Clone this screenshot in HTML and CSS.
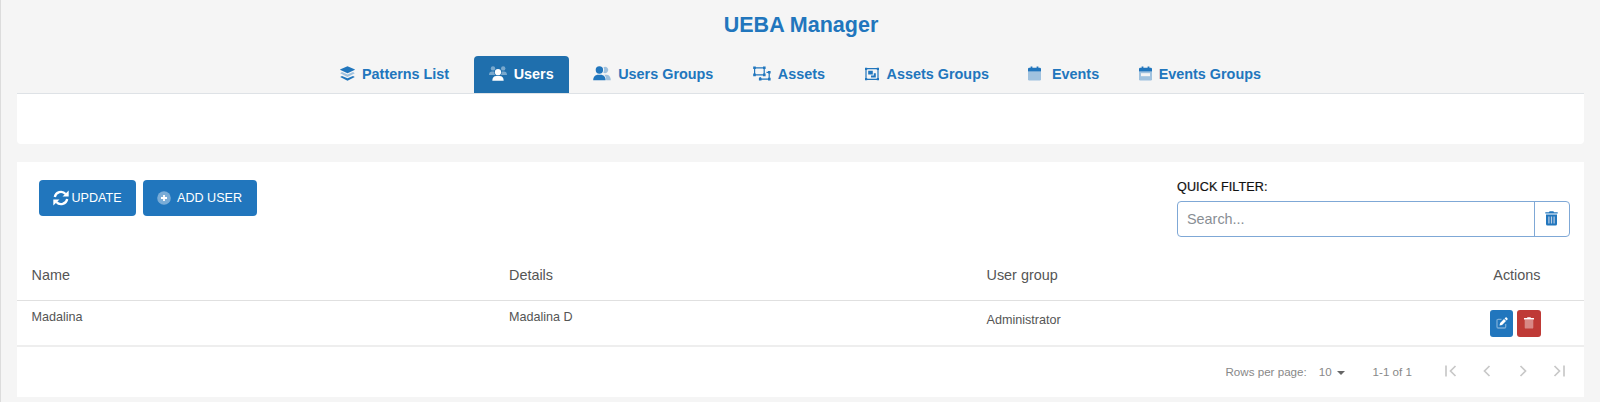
FILE: index.html
```html
<!DOCTYPE html>
<html lang="en">
<head>
    <meta charset="UTF-8">
    <meta name="viewport" content="width=device-width, initial-scale=1.0">
    <title>UEBA Manager</title>
    <link rel="stylesheet" href="styles.css">
</head>
<body>
    <h1>UEBA Manager</h1>

    <!-- Tabs -->
    <nav class="tabs">
        <a class="tab">
            <svg class="icon" width="15" height="15" viewBox="0 0 15 15">
                <path d="M7.5 0.2 14.5 3.300q.7.400 0 .8L7.500 7.300 0.500 4.100q-.7-.4 0-.8z"/>
                <path class="faded" d="M0.200 7.200 2 6 7.500 8.500 13 6 14.800 7.200 7.500 10.900z"/>
                <path d="M0.200 10.900 2 9.900 7.500 12.300 13 9.900 14.800 10.900 7.500 14.700z"/>
            </svg>
            <span>Patterns List</span>
        </a>
        <a class="tab active">
            <svg class="icon" width="18" height="15" viewBox="0 0 18 15">
                <g class="faded">
                    <circle cx="4" cy="2.4" r="2.2"/>
                    <circle cx="14.2" cy="2.4" r="2.2"/>
                    <path d="M0 9C0 6.500 1.200 5.400 3 5.400h2.200C5.200 7 5.500 8 6.300 9z"/>
                    <path d="M18 9c0-2.500-1.200-3.600-3-3.600h-2.200c0 1.600-.3 2.600-1.100 3.600z"/>
                </g>
                <circle cx="9" cy="6.200" r="3.100"/>
                <path d="M3.300 14.700c0-3 1.500-4.700 4-4.700h3.400c2.500 0 4 1.700 4 4.700z"/>
            </svg>
            <span>Users</span>
        </a>
        <a class="tab">
            <svg class="icon" width="18" height="15" viewBox="0 0 18 15">
                <g class="faded">
                    <path d="M10.500 1.300A3.100 3.100 0 1 1 10.200 6.500 5 5 0 0 0 10.500 1.300z"/>
                    <path d="M12 8.700h1.500c2.500 0 4.300 2 4.300 5.500h-4.600c0-2.300-.5-4-1.900-5.500z"/>
                </g>
                <circle cx="6.400" cy="4" r="3.700"/>
                <path d="M0.200 14.300c0-3.500 2-5.600 5-5.600h2.400c3 0 5 2.100 5 5.600z"/>
            </svg>
            <span>Users Groups</span>
        </a>
        <a class="tab">
            <svg class="icon" width="18" height="15" viewBox="0 0 18 15">
                <path class="line" d="M1.600 1.900h9.600v7H1.600zM13.500 6.300h2.700v6.800H7.200V11"/>
                <path d="M0.200 0.500h2.600v2.600H0.200zM10 0.500h2.600v2.600H10zM0.200 7.600h2.600v2.600H0.200zM10 7.600h2.600v2.600H10zM15 5h2.600v2.600H15zM15 11.800h2.600v2.600H15zM5.900 11.800h2.600v2.600H5.900z"/>
            </svg>
            <span>Assets</span>
        </a>
        <a class="tab">
            <svg class="icon gap-wide" width="14" height="14" viewBox="0 0 14 14">
                <path class="line" d="M1 1.700h12v10.600H1z"/>
                <path d="M0 0.800h2.200v2.200H0zM11.800 0.800H14v2.200h-2.200zM0 11h2.200v2.200H0zM11.800 11H14v2.200h-2.200zM3.200 3.800h4.600v3.700H3.200zM8.800 6.300h2v4.200H6V8.500h2.800z"/>
            </svg>
            <span>Assets Groups</span>
        </a>
        <a class="tab">
            <svg class="icon gap-extra" width="13" height="15" viewBox="0 0 13 15">
                <path d="M0 5.500V3q0-1.200 1.200-1.200H2.600V0.500h1.800v1.300h4.200V0.500h1.800v1.300h1.400Q13 1.800 13 3v2.500z"/>
                <path class="faded" d="M0 5.500h13v7.700q0 1.200-1.200 1.200H1.200Q0 14.400 0 13.200z"/>
            </svg>
            <span>Events</span>
        </a>
        <a class="tab">
            <svg class="icon" width="13" height="15" viewBox="0 0 13 15">
                <path d="M0 5.500V3q0-1.200 1.200-1.200H2.600V0.500h1.800v1.300h4.200V0.500h1.800v1.300h1.400Q13 1.800 13 3v2.500z"/>
                <path class="faded" d="M0 5.500h13v7.700q0 1.200-1.200 1.200H1.200Q0 14.400 0 13.200z"/>
                <path class="blank" d="M2 7.200h9v3H2z"/>
            </svg>
            <span>Events Groups</span>
        </a>
    </nav>

    <div class="panel"></div>

    <!-- Users table -->
    <main class="card">
        <div class="toolbar">
            <div class="buttons">
                <button class="btn btn-update">
                    <svg width="16" height="16" viewBox="0 0 16 16">
                        <path class="arc" d="M1.800 7A6.200 6.200 0 0 1 12.600 4M14.200 9A6.200 6.200 0 0 1 3.400 12"/>
                        <path d="M15.700 0.400V6.600H9.500zM0.300 15.600V9.400h6.200z"/>
                    </svg>
                    <span>UPDATE</span>
                </button>
                <button class="btn btn-add">
                    <svg width="14" height="14" viewBox="0 0 14 14">
                        <circle class="faded" cx="7" cy="7" r="6.800"/>
                        <path d="M6.100 4h1.800v2.100H10v1.800H7.900V10H6.100V7.900H4V6.100h2.100z"/>
                    </svg>
                    <span>ADD USER</span>
                </button>
            </div>
            <div class="filter">
                <label for="search">QUICK FILTER:</label>
                <div class="search-group">
                    <input type="text" id="search" placeholder="Search...">
                    <button class="clear">
                        <svg width="13" height="15" viewBox="0 0 13 15">
                            <path d="M0.300 1.200H4L4.600 0.300h3.800L9 1.200h3.700v1.300H0.300z"/>
                            <path d="M1 3.500h11v9.500q0 1.500-1.500 1.500h-8Q1 14.500 1 13z"/>
                            <path class="bars" d="M3.900 5.500v7M6.500 5.500v7M9.100 5.500v7"/>
                        </svg>
                    </button>
                </div>
            </div>
        </div>

        <div class="row head">
            <div>Name</div>
            <div>Details</div>
            <div>User group</div>
            <div class="actions-title">Actions</div>
        </div>
        <div class="row body">
            <div>Madalina</div>
            <div>Madalina D</div>
            <div class="group">Administrator</div>
            <div class="actions">
                <button class="edit">
                    <svg width="12" height="12" viewBox="0 0 12 12">
                        <path class="faded frame" d="M5.500 2.300H2.200Q1 2.300 1 3.500v6.300Q1 11 2.200 11h6.300q1.200 0 1.200-1.200V7"/>
                        <path d="M3.500 8.600 4.100 6 8 2.100 10 4.100 6.100 8zM8.600 1.500 9.500 0.600q.6-.5 1.200 0l.8.800q.5.600 0 1.200l-.9.900z"/>
                    </svg>
                </button>
                <button class="delete">
                    <svg width="10" height="12" viewBox="0 0 10 12">
                        <path d="M0 0.900h3L3.500 0.200h3L7 0.900h3v1.500H0z"/>
                        <path class="faded" d="M0.700 2.400h8.600V10.400q0 1.200-1.200 1.200H1.900Q0.700 11.600 0.700 10.400z"/>
                    </svg>
                </button>
            </div>
        </div>

        <div class="pagination">
            <span class="label">Rows per page:</span>
            <span class="size">10</span>
            <span class="caret"></span>
            <span class="range">1-1 of 1</span>
            <div class="pager">
                <svg width="12" height="12" viewBox="0 0 12 12"><path d="M1 .5v11M10.500 1 5.500 6l5 5"/></svg>
                <svg width="12" height="12" viewBox="0 0 12 12"><path d="M8.500 1 3.500 6l5 5"/></svg>
                <svg width="12" height="12" viewBox="0 0 12 12"><path d="M3.500 1 8.500 6l-5 5"/></svg>
                <svg width="12" height="12" viewBox="0 0 12 12"><path d="M11 .5v11M1.500 1 6.500 6l-5 5"/></svg>
            </div>
        </div>
    </main>
</body>
</html>
```
FILE: styles.css
```css
* {
    box-sizing: border-box;
}

body {
    margin: 0;
    padding: 0 16px 0 16px;
    height: 402px;
    overflow: hidden;
    background-color: #f5f5f5;
    border-left: 1px solid #dcdcdc;
    font-family: "Liberation Sans", Arial, sans-serif;
    color: #555;
}

h1 {
    margin: 0;
    height: 56px;
    padding: 12px 0 0 1px;
    font-size: 21.5px;
    line-height: 26px;
    text-align: center;
    color: #2176bd;
}

button {
    border: none;
    padding: 0;
    font-family: inherit;
    cursor: pointer;
}

svg {
    flex: none;
    fill: currentColor;
}

.faded {
    opacity: 0.4;
}

/* Tabs */
.tabs {
    display: flex;
    justify-content: center;
    gap: 9.5px;
    height: 38px;
    border-bottom: 1px solid #dee2e6;
}

.tab {
    display: flex;
    align-items: center;
    padding: 0 15px 2px;
    font-size: 14.4px;
    font-weight: bold;
    color: #2176bd;
    white-space: nowrap;
}

.tab.active {
    background-color: #1f6fad;
    color: #fff;
    border-radius: 4px 4px 0 0;
}

.icon {
    margin-right: 7px;
}

.gap-wide {
    margin-right: 8px;
}

.gap-extra {
    margin-right: 10.5px;
}

.line {
    fill: none;
    stroke: currentColor;
    stroke-width: 1.2;
}

.blank {
    fill: #f5f5f5;
}

.panel {
    height: 50px;
    background-color: #fff;
    border-radius: 0 0 4px 4px;
}

/* Card */
.card {
    margin-top: 18px;
    height: 235px;
    background-color: #fff;
}

.toolbar {
    display: flex;
    justify-content: space-between;
    height: 88px;
    padding: 18px 14px 0 21.5px;
}

.buttons {
    display: flex;
    gap: 7px;
}

.btn {
    display: flex;
    align-items: center;
    height: 36px;
    padding: 0 14px 1px;
    border-radius: 4px;
    background-color: #2176bd;
    color: #fff;
    font-size: 12.6px;
}

.btn-update {
    width: 97.5px;
    gap: 3px;
}

.btn-add {
    width: 114px;
    gap: 6px;
}

.arc {
    fill: none;
    stroke: currentColor;
    stroke-width: 2.3;
}

.filter {
    width: 393px;
}

.filter label {
    display: block;
    height: 21px;
    line-height: 15px;
    font-size: 12.6px;
    letter-spacing: 0.1px;
    color: #111;
    -webkit-text-stroke: 0.2px #111;
}

.search-group {
    display: flex;
    height: 36px;
    border: 1px solid #7fa8d6;
    border-radius: 4px;
}

.search-group input {
    flex: 1;
    border: none;
    outline: none;
    padding: 0 9px 1px;
    background: none;
    font-family: inherit;
    font-size: 14.4px;
}

.search-group input::placeholder {
    color: #888e94;
}

.clear {
    display: flex;
    align-items: center;
    justify-content: center;
    width: 35px;
    padding: 0 2px 2px 0;
    border-left: 1px solid #7fa8d6;
    background: none;
    color: #2176bd;
}

.bars {
    stroke: #b9cbe3;
    stroke-width: 1.2;
}

/* Table */
.row {
    display: grid;
    grid-template-columns: 477.5px 477.5px 1fr 80px;
    padding: 0 14.5px;
}

.head {
    height: 51px;
    line-height: 50px;
    font-size: 14.4px;
    border-bottom: 1px solid #e0e0e0;
}

.body {
    height: 46px;
    padding-top: 9px;
    line-height: 15px;
    font-size: 12.6px;
    border-bottom: 2px solid #eee;
}

.group {
    padding-top: 3px;
}

.actions-title {
    text-align: right;
    padding-right: 29px;
}

.actions {
    display: flex;
    justify-content: flex-end;
    gap: 4px;
    padding-right: 28.5px;
}

.actions button {
    display: flex;
    align-items: center;
    justify-content: center;
    width: 23px;
    height: 27px;
    padding-bottom: 2px;
    border-radius: 3px;
    color: #fff;
}

.actions .edit {
    background-color: #2176bd;
}

.actions .delete {
    width: 24px;
    background-color: #bf3a36;
}

.frame {
    fill: none;
    stroke: currentColor;
    stroke-width: 1.3;
}

/* Pagination */
.pagination {
    display: flex;
    align-items: center;
    justify-content: flex-end;
    height: 50px;
    padding: 0 19.5px 2px 0;
    font-size: 11.6px;
    color: #888;
}

.size {
    margin-left: 12px;
    padding-top: 1px;
}

.caret {
    margin: 3px 0 0 5px;
    border: 4px solid transparent;
    border-top-color: #666;
    border-bottom: none;
}

.range {
    margin: 0 33.5px 0 28px;
}

.pager {
    display: flex;
    gap: 23.7px;
}

.pager path {
    fill: none;
    stroke: #c8c8c8;
    stroke-width: 1.7;
}
```
